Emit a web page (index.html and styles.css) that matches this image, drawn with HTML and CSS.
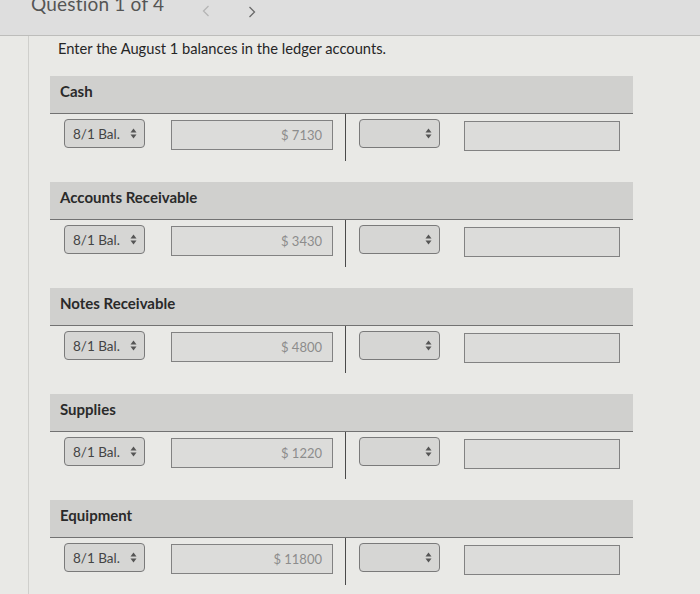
FILE: index.html
```html
<!DOCTYPE html>
<html lang="en">
<head>
<meta charset="utf-8">
<title>Question 1 of 4</title>
<link rel="stylesheet" href="styles.css">
</head>
<body>
<header class="topbar">
  <span class="qtitle">Question 1 of 4</span>
  <span class="nav nav-prev"><svg width="8" height="12" viewBox="0 0 8 12"><path d="M6.5 1 L1.5 6 L6.5 11" fill="none" stroke="currentColor" stroke-width="1.3"/></svg></span>
  <span class="nav nav-next"><svg width="8" height="12" viewBox="0 0 8 12"><path d="M1.5 1 L6.5 6 L1.5 11" fill="none" stroke="currentColor" stroke-width="1.3"/></svg></span>
</header>
<main class="content">
  <p class="instr">Enter the August 1 balances in the ledger accounts.</p>

  <section class="account">
    <div class="acct-head">Cash</div>
    <div class="acct-row">
      <div class="side debit">
        <div class="sel"><span>8/1 Bal.</span><svg class="updown" width="7" height="11" viewBox="0 0 7 11"><path d="M3.5 0.5 L6.5 4.5 L0.5 4.5 Z M3.5 10.5 L6.5 6.5 L0.5 6.5 Z" fill="currentColor"/></svg></div>
        <div class="inp">$ 7130</div>
      </div>
      <div class="side credit">
        <div class="sel"><span></span><svg class="updown" width="7" height="11" viewBox="0 0 7 11"><path d="M3.5 0.5 L6.5 4.5 L0.5 4.5 Z M3.5 10.5 L6.5 6.5 L0.5 6.5 Z" fill="currentColor"/></svg></div>
        <div class="inp inp-wide"></div>
      </div>
    </div>
  </section>

  <section class="account">
    <div class="acct-head">Accounts Receivable</div>
    <div class="acct-row">
      <div class="side debit">
        <div class="sel"><span>8/1 Bal.</span><svg class="updown" width="7" height="11" viewBox="0 0 7 11"><path d="M3.5 0.5 L6.5 4.5 L0.5 4.5 Z M3.5 10.5 L6.5 6.5 L0.5 6.5 Z" fill="currentColor"/></svg></div>
        <div class="inp">$ 3430</div>
      </div>
      <div class="side credit">
        <div class="sel"><span></span><svg class="updown" width="7" height="11" viewBox="0 0 7 11"><path d="M3.5 0.5 L6.5 4.5 L0.5 4.5 Z M3.5 10.5 L6.5 6.5 L0.5 6.5 Z" fill="currentColor"/></svg></div>
        <div class="inp inp-wide"></div>
      </div>
    </div>
  </section>

  <section class="account">
    <div class="acct-head">Notes Receivable</div>
    <div class="acct-row">
      <div class="side debit">
        <div class="sel"><span>8/1 Bal.</span><svg class="updown" width="7" height="11" viewBox="0 0 7 11"><path d="M3.5 0.5 L6.5 4.5 L0.5 4.5 Z M3.5 10.5 L6.5 6.5 L0.5 6.5 Z" fill="currentColor"/></svg></div>
        <div class="inp">$ 4800</div>
      </div>
      <div class="side credit">
        <div class="sel"><span></span><svg class="updown" width="7" height="11" viewBox="0 0 7 11"><path d="M3.5 0.5 L6.5 4.5 L0.5 4.5 Z M3.5 10.5 L6.5 6.5 L0.5 6.5 Z" fill="currentColor"/></svg></div>
        <div class="inp inp-wide"></div>
      </div>
    </div>
  </section>

  <section class="account">
    <div class="acct-head">Supplies</div>
    <div class="acct-row">
      <div class="side debit">
        <div class="sel"><span>8/1 Bal.</span><svg class="updown" width="7" height="11" viewBox="0 0 7 11"><path d="M3.5 0.5 L6.5 4.5 L0.5 4.5 Z M3.5 10.5 L6.5 6.5 L0.5 6.5 Z" fill="currentColor"/></svg></div>
        <div class="inp">$ 1220</div>
      </div>
      <div class="side credit">
        <div class="sel"><span></span><svg class="updown" width="7" height="11" viewBox="0 0 7 11"><path d="M3.5 0.5 L6.5 4.5 L0.5 4.5 Z M3.5 10.5 L6.5 6.5 L0.5 6.5 Z" fill="currentColor"/></svg></div>
        <div class="inp inp-wide"></div>
      </div>
    </div>
  </section>

  <section class="account">
    <div class="acct-head">Equipment</div>
    <div class="acct-row">
      <div class="side debit">
        <div class="sel"><span>8/1 Bal.</span><svg class="updown" width="7" height="11" viewBox="0 0 7 11"><path d="M3.5 0.5 L6.5 4.5 L0.5 4.5 Z M3.5 10.5 L6.5 6.5 L0.5 6.5 Z" fill="currentColor"/></svg></div>
        <div class="inp">$ 11800</div>
      </div>
      <div class="side credit">
        <div class="sel"><span></span><svg class="updown" width="7" height="11" viewBox="0 0 7 11"><path d="M3.5 0.5 L6.5 4.5 L0.5 4.5 Z M3.5 10.5 L6.5 6.5 L0.5 6.5 Z" fill="currentColor"/></svg></div>
        <div class="inp inp-wide"></div>
      </div>
    </div>
  </section>
</main>
</body>
</html>
```
FILE: styles.css
```css
* { box-sizing: border-box; }
html, body { margin: 0; padding: 0; }
body {
  width: 700px;
  height: 594px;
  overflow: hidden;
  background: #e9e9e6;
  font-family: Lato, "Open Sans", "Liberation Sans", sans-serif;
  color: #2b2b2b;
}
.topbar {
  height: 36px;
  background: #dedede;
  border-bottom: 1px solid #bdbdbb;
  display: flex;
  align-items: flex-start;
  padding-left: 31px;
}
.qtitle {
  font-size: 19px;
  line-height: 19px;
  margin-top: -6px;
  color: #555;
  letter-spacing: 0.2px;
}
.nav { display: block; }
.nav-prev { margin-left: 38px; margin-top: 1px; color: #b5b5b5; }
.nav-next { margin-left: 38px; margin-top: 2px; color: #6a6a6a; }
.content {
  margin-left: 28px;
  border-left: 1px solid #cfcfcc;
  padding-left: 21px;
  width: 605px;
  min-height: 560px;
}
.instr {
  margin: 0;
  padding: 3px 0 0 8px;
  height: 40px;
  font-size: 14.7px;
  line-height: 18px;
  color: #262626;
}
.account { margin-bottom: 0; }
.acct-head {
  height: 38px;
  background: #d0d0ce;
  border-bottom: 1px solid #727272;
  padding: 6px 0 0 10px;
  font-size: 15px;
  font-weight: 700;
  line-height: 18px;
  color: #2a2a2a;
}
.acct-row {
  display: flex;
  height: 68px;
}
.side {
  height: 47px;
  display: flex;
  align-items: flex-start;
  padding-top: 5px;
}
.debit {
  width: 296px;
  padding-left: 14px;
  border-right: 1px solid #4a4a4a;
  gap: 26px;
}
.credit {
  padding-left: 13px;
  gap: 24px;
}
.sel {
  width: 81px;
  height: 29px;
  background: #d6d6d4;
  border: 1px solid #7a7a7a;
  border-radius: 4px;
  display: flex;
  align-items: center;
  justify-content: space-between;
  padding: 0 7px 0 8px;
  font-size: 13.5px;
  color: #444;
}
.updown { color: #555; }
.inp {
  width: 162px;
  height: 30px;
  margin-top: 1px;
  background: #dcdcda;
  border: 1px solid #828282;
  display: flex;
  align-items: center;
  justify-content: flex-end;
  padding-right: 10px;
  font-size: 13px;
  color: #8c8c8c;
}
.inp-wide { width: 156px; margin-top: 2px; }
```
